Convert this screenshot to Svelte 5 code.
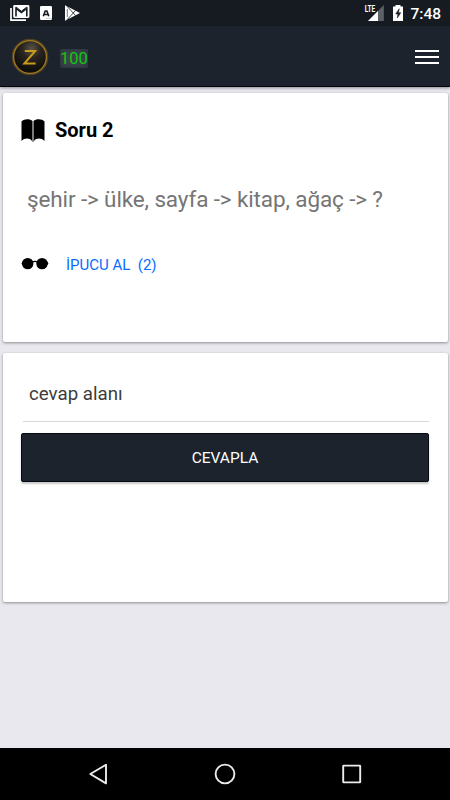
<script lang="ts">
  let score = $state(100);
  let hints = $state(2);
  let answer = $state("");
  const question = "şehir -> ülke, sayfa -> kitap, ağaç -> ?";
</script>

<div class="screen">
  <div class="status">
    <svg width="85" height="26" viewBox="0 0 85 26">
      <path d="M11 8v12.2h15" fill="none" stroke="#fff" stroke-width="1.7" />
      <rect x="13.2" y="5" width="16.2" height="13" rx="1.4" fill="#fff" />
      <path d="M16 16.4V8.4l5.4 4.1 5.4-4.1v8" fill="none" stroke="#151b21" stroke-width="1.6" />
      <path d="M16 7l5.4 4.2L26.8 7" fill="none" stroke="#151b21" stroke-width="1" />
      <rect x="40" y="6" width="12" height="14" rx="1.2" fill="#fff" />
      <path d="M43.3 16.3l1.9-5.3h1.7l1.9 5.3M44 14.5h4" fill="none" stroke="#151b21" stroke-width="1.6" />
      <path d="M46.5 18.3h5" stroke="#999" stroke-width="1" stroke-dasharray="1 1" />
      <path d="M65 5.2L80 13 65 20.8z" fill="#fff" />
      <path d="M67 6.2l8.6 9.4M67 19.8l8.6-9.4" fill="none" stroke="#151b21" stroke-width=".8" />
      <path d="M67.3 9v8" fill="none" stroke="#151b21" stroke-width=".6" />
    </svg>
    <svg class="right" width="50" height="26" viewBox="0 0 50 26">
      <path d="M13 21L28.8 5v16z" fill="#5c6165" />
      <path d="M13 21l10-10.1V21z" fill="#fff" />
      <path d="M9 4h12v8.6H9z" fill="#151b21" />
      <text x="9.7" y="12" textLength="10.4" lengthAdjust="spacingAndGlyphs">LTE</text>
      <path d="M38 6.5h2.5V5h5v1.5H48V21H38z" fill="#fff" />
      <path d="M44.2 8.7l-3.5 5.2h2.2l-.6 4.2 3.5-5.4h-2.2z" fill="#151b21" stroke="#151b21" stroke-width=".5" />
    </svg>
    <span class="clock">7:48</span>
  </div>

  <header>
    <svg class="logo" width="38" height="38" viewBox="0 0 38 38">
      <defs>
        <radialGradient id="coin" cx=".55" cy=".25" r=".65">
          <stop offset="0" stop-color="#5b5549" />
          <stop offset=".45" stop-color="#28251f" />
          <stop offset="1" stop-color="#100f0d" />
        </radialGradient>
      </defs>
      <circle cx="19" cy="19" r="16.8" fill="none" stroke="#8c681b" stroke-opacity=".45" stroke-width="3" />
      <circle cx="19" cy="19" r="16.4" fill="url(#coin)" stroke="#a47a1e" stroke-width="1.3" />
      <path d="M13.8 13h10.4L13.4 25.6h11.2" fill="none" stroke="#c99a1d" stroke-width="2" />
    </svg>
    <span class="score">{score}</span>
    <button class="menu" aria-label="menu">
      <span></span>
      <span></span>
      <span></span>
    </button>
  </header>

  <main>
    <section class="card">
      <div class="title">
        <svg width="24" height="24" viewBox="0 0 24 24">
          <path d="M.5 2.6C3-.3 9-.3 11.5 2V23C10 18.6 3.3 18.6.5 22z" />
          <path d="M12.5 2C15-.3 21-.3 23.5 2.6V22C20.7 18.6 14 18.6 12.5 23z" />
          <path d="M12 2.5v20.5" stroke="#777" stroke-width=".7" />
        </svg>
        <h2>Soru 2</h2>
      </div>
      <p class="question">{question}</p>
      <div class="hint">
        <svg width="28" height="14" viewBox="0 0 28 14">
          <circle cx="6.7" cy="6.6" r="5.7" />
          <circle cx="21" cy="6.6" r="5.7" />
          <path d="M.4 6.4l2-2.6v5zM27.5 6.4l-2-2.6v5z" />
          <path d="M11 5.4q3-2 6 0" fill="none" stroke="#000" stroke-width="1.3" />
        </svg>
        <button>İPUCU AL&nbsp; ({hints})</button>
      </div>
    </section>

    <section class="card answer">
      <input bind:value={answer} placeholder="cevap alanı" />
      <button class="send">CEVAPLA</button>
    </section>
  </main>

  <nav>
    <svg width="450" height="52" viewBox="0 0 450 52" fill="none" stroke="#ececec" stroke-width="1.9" stroke-linejoin="round">
      <path d="M106 16.8v18.6L90.3 26z" />
      <circle cx="225" cy="26" r="9.4" />
      <rect x="343.2" y="17.6" width="17" height="16.8" rx=".5" />
    </svg>
  </nav>
</div>

<style>
  :global(body) {
    margin: 0;
  }
  .screen {
    display: flex;
    flex-direction: column;
    width: 450px;
    height: 800px;
    overflow: hidden;
    background: #e9e8ee;
    font-family: Roboto, sans-serif;
  }
  button {
    border: 0;
    padding: 0;
    background: none;
    font-family: inherit;
  }
  .status {
    display: flex;
    height: 26px;
    background: #151b21;
  }
  .status .right {
    margin-left: auto;
  }
  .status text {
    fill: #fff;
    font-size: 9.5px;
    font-weight: 700;
  }
  .clock {
    width: 36px;
    color: #fff;
    font-size: 15.5px;
    font-weight: 500;
    line-height: 28px;
    margin-right: 9px;
    text-align: right;
    white-space: nowrap;
  }
  .status svg {
    flex: none;
  }
  header {
    display: flex;
    align-items: center;
    box-sizing: border-box;
    height: 61px;
    padding: 2px 11px 0;
    background: #1c232c;
    border-bottom: 1px solid #02060d;
    box-shadow: 0 1px 3px rgba(0, 0, 0, 0.4);
  }
  .score {
    margin: 3px 0 0 11px;
    color: #0dc80d;
    background: #3c444b;
    box-shadow: inset 0 0 5px 1px #28313a;
    font-size: 16.5px;
    line-height: 19px;
  }
  .menu {
    display: flex;
    flex-direction: column;
    gap: 4px;
    width: 24px;
    margin-left: auto;
  }
  .menu span {
    height: 2px;
    background: #fff;
  }
  main {
    flex: 1;
    display: flex;
    flex-direction: column;
    gap: 11px;
    padding: 6px 2px 0 2.5px;
  }
  .card {
    box-sizing: border-box;
    height: 249px;
    padding: 26px 19px 0 18.5px;
    border-radius: 2px;
    background: #fff;
    box-shadow: 0 1px 3px rgba(0, 0, 0, 0.4);
  }
  .title {
    display: flex;
    align-items: center;
    height: 24px;
  }
  h2 {
    margin: -2px 0 0 10px;
    font-size: 20px;
    font-weight: 700;
    line-height: 24px;
  }
  .question {
    margin: 41px 0 0 6px;
    color: #757575;
    font-size: 22.5px;
    letter-spacing: -0.12px;
    line-height: 30px;
    white-space: nowrap;
  }
  .hint {
    display: flex;
    align-items: center;
    height: 20px;
    margin-top: 40px;
  }
  .hint button {
    margin: 1px 0 0 17px;
    color: #0a6cff;
    font-size: 15px;
    line-height: 20px;
  }
  .answer {
    display: flex;
    flex-direction: column;
    padding-top: 15px;
  }
  input {
    box-sizing: border-box;
    height: 54px;
    margin-left: 2px;
    padding: 0 0 1px 6px;
    border: 0;
    border-bottom: 1px solid #d9d9d9;
    color: #3c3c3c;
    font-family: inherit;
    font-size: 18.7px;
  }
  input::placeholder {
    color: #3c3c3c;
  }
  .send {
    height: 49px;
    margin: 11px 0 0;
    box-sizing: border-box;
    border: 1px solid #050a12;
    border-radius: 2px;
    background: #1c232c;
    box-shadow: 0 2px 2px rgba(0, 0, 0, 0.22);
    color: #fff;
    font-size: 15.5px;
  }
  nav {
    height: 52px;
    background: #000;
  }
</style>
